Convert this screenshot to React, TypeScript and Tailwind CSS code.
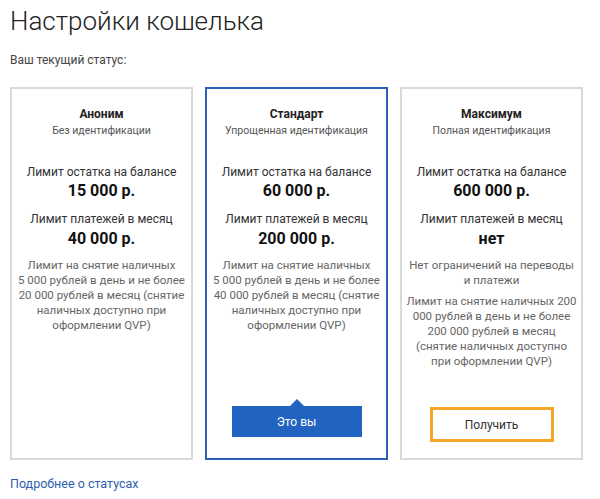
const font = { fontFamily: 'Roboto, "Noto Sans", sans-serif' };

type Plan = {
  name: string;
  ident: string;
  balance: string;
  payments: string;
  notes: string[][];
  current?: boolean;
};

const plans: Plan[] = [
  {
    name: "Аноним",
    ident: "Без идентификации",
    balance: "15 000 р.",
    payments: "40 000 р.",
    notes: [
      [
        "Лимит на снятие наличных",
        "5 000 рублей в день и не более",
        "20 000 рублей в месяц (снятие",
        "наличных доступно при",
        "оформлении QVP)",
      ],
    ],
  },
  {
    name: "Стандарт",
    ident: "Упрощенная идентификация",
    balance: "60 000 р.",
    payments: "200 000 р.",
    current: true,
    notes: [
      [
        "Лимит на снятие наличных",
        "5 000 рублей в день и не более",
        "40 000 рублей в месяц (снятие",
        "наличных доступно при",
        "оформлении QVP)",
      ],
    ],
  },
  {
    name: "Максимум",
    ident: "Полная идентификация",
    balance: "600 000 р.",
    payments: "нет",
    notes: [
      ["Нет ограничений на переводы", "и платежи"],
      [
        "Лимит на снятие наличных 200",
        "000 рублей в день и не более",
        "200 000 рублей в месяц",
        "(снятие наличных доступно",
        "при оформлении QVP)",
      ],
    ],
  },
];

function PlanCard({ plan }: { plan: Plan }) {
  return (
    <div
      className={
        plan.current
          ? "flex flex-col items-center h-[373px] border-2 border-[#2b60b3] bg-white text-center"
          : "flex flex-col items-center h-[373px] border-2 border-[#d9d9d9] bg-white text-center"
      }
    >
      <div className="mt-[17px] text-[12px] leading-4 font-bold text-[#222]">{plan.name}</div>
      <div className="mt-[2px] text-[10.5px] leading-[14px] text-[#555]">{plan.ident}</div>

      <div className="mt-[26px] text-[12px] leading-4 text-[#333]">Лимит остатка на балансе</div>
      <div className="mt-[1px] text-[16px] leading-5 font-bold text-[#111]">{plan.balance}</div>
      <div className="mt-[10px] text-[12px] leading-4 text-[#333]">Лимит платежей в месяц</div>
      <div className="mt-[2px] text-[16px] leading-5 font-bold text-[#111]">{plan.payments}</div>

      {plan.notes.map((lines, i) => (
        <p
          key={i}
          className={
            i === 0
              ? "mt-[9px] text-[11.5px] leading-[15px] text-[#666]"
              : "mt-[6px] text-[11.5px] leading-[15px] text-[#666]"
          }
        >
          {lines.map((l, j) => (
            <span key={j} className="block whitespace-nowrap">
              {l}
            </span>
          ))}
        </p>
      ))}

      {plan.current ? (
        <div className="mt-auto mb-[21px] flex flex-col items-center">
          <div className="w-0 h-0 border-x-[7px] border-x-transparent border-b-[7px] border-b-[#2163c0]" />
          <div className="w-[130px] h-[31px] bg-[#2163c0] text-white text-[12px] flex items-center justify-center">
            Это вы
          </div>
        </div>
      ) : plan.name === "Максимум" ? (
        <button className="mt-auto mb-[16px] w-[124px] h-[35px] border-[3px] border-[#f5a52a] bg-white text-[12px] text-[#333]">
          Получить
        </button>
      ) : null}
    </div>
  );
}

export default function App() {
  return (
    <div className="w-[600px] h-[499px] bg-white px-[10px]" style={font}>
      <h1 className="pt-[2px] text-[26px] leading-[38px] font-light text-[#222]">Настройки кошелька</h1>
      <p className="mt-[12px] text-[12px] leading-4 text-[#444]">Ваш текущий статус:</p>

      <div className="mt-[19px] w-[573px] grid grid-cols-3 gap-[12px]">
        {plans.map((p) => (
          <PlanCard key={p.name} plan={p} />
        ))}
      </div>

      <a href="#" className="block mt-[16px] text-[12.5px] leading-4 text-[#2d5fae]">
        Подробнее о статусах
      </a>
    </div>
  );
}
